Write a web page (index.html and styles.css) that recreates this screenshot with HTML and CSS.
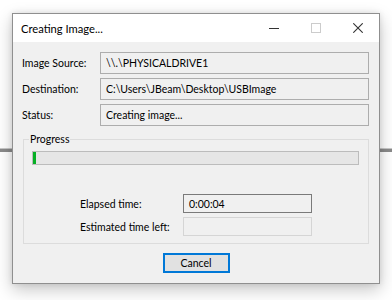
FILE: index.html
```html
<!DOCTYPE html>
<html>
<head>
<meta charset="utf-8">
<link rel="stylesheet" href="styles.css">
</head>
<body>
<div class="bgline left"></div>
<div class="bgline right"></div>
<div class="window">
  <div class="titlebar">
    <span class="title">Creating Image...</span>
    <div class="controls">
      <span class="ctl"><svg width="10" height="10" viewBox="0 0 10 10"><path d="M0 5.5H10" stroke="#333" stroke-width="1"/></svg></span>
      <span class="ctl"><svg width="10" height="10" viewBox="0 0 10 10"><rect x="0.5" y="0.5" width="9" height="9" fill="none" stroke="#cccccc" stroke-width="1"/></svg></span>
      <span class="ctl"><svg width="10" height="10" viewBox="0 0 10 10"><path d="M0.3 0.3L9.7 9.7M9.7 0.3L0.3 9.7" stroke="#333" stroke-width="1.1"/></svg></span>
    </div>
  </div>
  <div class="content">
    <div class="rows">
      <div class="row"><span class="label">Image Source:</span><div class="field">\\.\PHYSICALDRIVE1</div></div>
      <div class="row"><span class="label">Destination:</span><div class="field">C:\Users\JBeam\Desktop\USBImage</div></div>
      <div class="row"><span class="label">Status:</span><div class="field">Creating image...</div></div>
    </div>
    <fieldset class="group">
      <legend>Progress</legend>
      <div class="bar"><div class="fill" style="width:3px"></div></div>
      <div class="times">
        <div class="trow"><span class="tlabel">Elapsed time:</span><div class="tfield active">0:00:04</div></div>
        <div class="trow"><span class="tlabel">Estimated time left:</span><div class="tfield"></div></div>
      </div>
    </fieldset>
    <div class="buttons"><button class="btn">Cancel</button></div>
  </div>
</div>
</body>
</html>
```
FILE: styles.css
```css
html, body {
  margin: 0;
  padding: 0;
}
body {
  width: 392px;
  height: 300px;
  background: #ffffff;
  position: relative;
  overflow: hidden;
  font-family: Lato, "Noto Sans", sans-serif;
  font-size: 10.5px;
  color: #000;
  white-space: nowrap;
}
.bgline {
  position: absolute;
  top: 148px;
  height: 3px;
  background: #8a8a8a;
  border-top: 1px solid #c8c8c8;
}
.bgline.left { left: 0; width: 12px; }
.bgline.right { left: 380px; width: 12px; }
.window {
  position: relative;
  margin-left: 12px;
  margin-top: 13px;
  width: 366px;
  height: 269px;
  border: 1px solid #8f8f8f;
  background: #f0f0f0;
  box-shadow: 0 6px 16px rgba(0,0,0,0.22), 0 0 6px rgba(0,0,0,0.10);
  display: flex;
  flex-direction: column;
}
.titlebar {
  height: 28px;
  background: #ffffff;
  display: flex;
  align-items: center;
  justify-content: space-between;
}
.title {
  padding-left: 8px;
  font-size: 11.2px;
  color: #000;
}
.controls {
  display: flex;
  align-items: center;
  gap: 32px;
  padding-right: 16px;
}
.ctl {
  display: flex;
  width: 10px;
  height: 10px;
}
.content {
  flex: 1;
  padding: 10px 10px 0 9px;
  display: flex;
  flex-direction: column;
}
.rows {
  display: flex;
  flex-direction: column;
  gap: 4px;
}
.row {
  display: flex;
  align-items: center;
}
.label {
  width: 78px;
  color: #000;
}
.field {
  flex: 1;
  height: 20px;
  border: 1px solid #adadad;
  background: #f0f0f0;
  padding-left: 5px;
  display: flex;
  align-items: center;
  color: #000;
}
.group {
  margin: 6px 0 0 1px;
  padding: 5px 9px 7px 8px;
  border: 1px solid #dcdcdc;
  min-width: 0;
}
.group legend {
  padding: 0 1px;
  margin-left: -3px;
  line-height: 14px;
}
.bar {
  height: 12px;
  border: 1px solid #bcbcbc;
  background: #e6e6e6;
  display: flex;
}
.fill {
  height: 100%;
  background: #06b025;
}
.times {
  margin-top: 29px;
  display: flex;
  flex-direction: column;
  gap: 4px;
  padding-left: 48px;
}
.trow {
  display: flex;
  align-items: center;
}
.tlabel {
  width: 103px;
  color: #000;
}
.tfield {
  width: 122px;
  height: 17px;
  border: 1px solid #d5d5d5;
  background: #f0f0f0;
  padding-left: 5px;
  display: flex;
  align-items: center;
}
.tfield.active {
  border-color: #7a7a7a;
}
.buttons {
  display: flex;
  justify-content: center;
  margin-top: 9px;
}
.btn {
  width: 67px;
  height: 20px;
  border: 2px solid #0078d7;
  background: #e1e1e1;
  font-family: Lato, "Noto Sans", sans-serif;
  font-size: 10.5px;
  color: #000;
  padding: 0;
  margin-left: 1px;
}
```
